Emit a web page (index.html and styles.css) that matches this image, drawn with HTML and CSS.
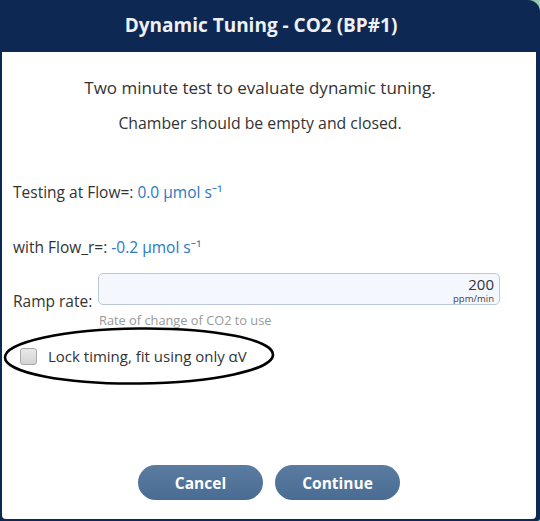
FILE: index.html
```html
<!DOCTYPE html>
<html>
<head>
<meta charset="utf-8">
<link rel="stylesheet" href="styles.css">
</head>
<body>
<div class="dialog">
  <div class="header">Dynamic Tuning - CO2 (BP#1)</div>
  <div class="content">
    <p class="intro first">Two minute test to evaluate dynamic tuning.</p>
    <p class="intro second">Chamber should be empty and closed.</p>
    <div class="row testing">Testing at Flow=: <span class="val">0.0 µmol s⁻¹</span></div>
    <div class="row withflow">with Flow_r=: <span class="val">-0.2 µmol s⁻¹</span></div>
    <div class="ramp">
      <span class="ramp-label">Ramp rate:</span>
      <div class="input">
        <span class="input-val">200</span>
        <span class="input-unit">ppm/min</span>
      </div>
    </div>
    <div class="helper">Rate of change of CO2 to use</div>
    <label class="check-row">
      <span class="checkbox"></span>
      <span class="check-label">Lock timing, fit using only αV</span>
    </label>
    <svg class="annot" width="276" height="62" viewBox="0 0 276 62">
      <ellipse cx="137" cy="31" rx="134" ry="27.5" fill="none" stroke="#000" stroke-width="2.6" transform="rotate(-0.6 137 31)"/>
    </svg>
    <div class="buttons">
      <button class="btn">Cancel</button>
      <button class="btn">Continue</button>
    </div>
  </div>
</div>
</body>
</html>
```

FILE: styles.css
```css
html, body {
  margin: 0;
  padding: 0;
  background: #0c2853;
}
body {
  width: 540px;
  height: 521px;
  overflow: hidden;
  font-family: "Open Sans", "Noto Sans", sans-serif;
  background: linear-gradient(90deg, #0c2853 0%, #0c2853 90%, #9fd3b8 100%);
}
.dialog {
  width: 540px;
  height: 521px;
  box-sizing: border-box;
  background: #0c2853;
  border-radius: 12px 12px 3px 3px;
  padding: 0 4px 2px 2px;
  display: flex;
  flex-direction: column;
}
.header {
  height: 52px;
  flex: none;
  display: flex;
  align-items: center;
  justify-content: center;
  color: #eef0f4;
  font-size: 19px;
  font-weight: 700;
  padding: 0 16px 2px 0;
  box-sizing: border-box;
}
.content {
  flex: 1;
  background: #fff;
  border-radius: 0 0 4px 4px;
  position: relative;
  display: flex;
  flex-direction: column;
  padding-left: 11px;
  color: #333;
}
.intro {
  margin: 0;
  text-align: center;
  line-height: 20px;
  padding-right: 29px;
}
.intro.first { margin-top: 26px; font-size: 17px; }
.intro.second { margin-top: 15px; font-size: 15.8px; }
.row {
  font-size: 15.5px;
  line-height: 20px;
}
.testing { margin-top: 49px; }
.withflow { margin-top: 35px; }
.val { color: #2b78c2; }
.ramp {
  margin-top: 16px;
  display: flex;
  align-items: flex-end;
}
.ramp-label {
  font-size: 15.5px;
  line-height: 20px;
  margin-bottom: -6px;
  width: 85px;
  flex: none;
}
.input {
  width: 402px;
  height: 32px;
  box-sizing: border-box;
  border: 1px solid #b9c6dd;
  border-radius: 5px;
  background: #f5f7fe;
  display: flex;
  flex-direction: column;
  align-items: flex-end;
  padding: 1px 5px 0 0;
}
.input-val {
  font-size: 15px;
  line-height: 19px;
  color: #333;
}
.input-unit {
  font-size: 9.5px;
  line-height: 10px;
  color: #444;
}
.helper {
  margin-top: 8px;
  margin-left: 86px;
  font-size: 12.8px;
  line-height: 14px;
  color: #999;
}
.check-row {
  margin-top: 19px;
  display: flex;
  align-items: center;
  height: 20px;
  margin-left: 7px;
}
.checkbox {
  width: 17px;
  height: 17px;
  box-sizing: border-box;
  border: 1px solid #a9a9a9;
  border-radius: 3px;
  background: linear-gradient(#e9e9e9, #d3d3d3);
  margin-right: 11px;
}
.check-label {
  font-size: 15px;
  line-height: 20px;
  color: #333;
}
.annot {
  position: absolute;
  left: 0;
  top: 273px;
}
.buttons {
  margin-top: auto;
  margin-bottom: 19px;
  display: flex;
  justify-content: center;
  gap: 12px;
  padding-right: 11px;
}
.btn {
  width: 125px;
  height: 35px;
  border: none;
  border-radius: 18px;
  background: linear-gradient(#5a7ca1, #4a6c93);
  color: #fff;
  font-family: "Open Sans", "Noto Sans", sans-serif;
  font-size: 15.5px;
  font-weight: 700;
  padding: 0;
}
```
